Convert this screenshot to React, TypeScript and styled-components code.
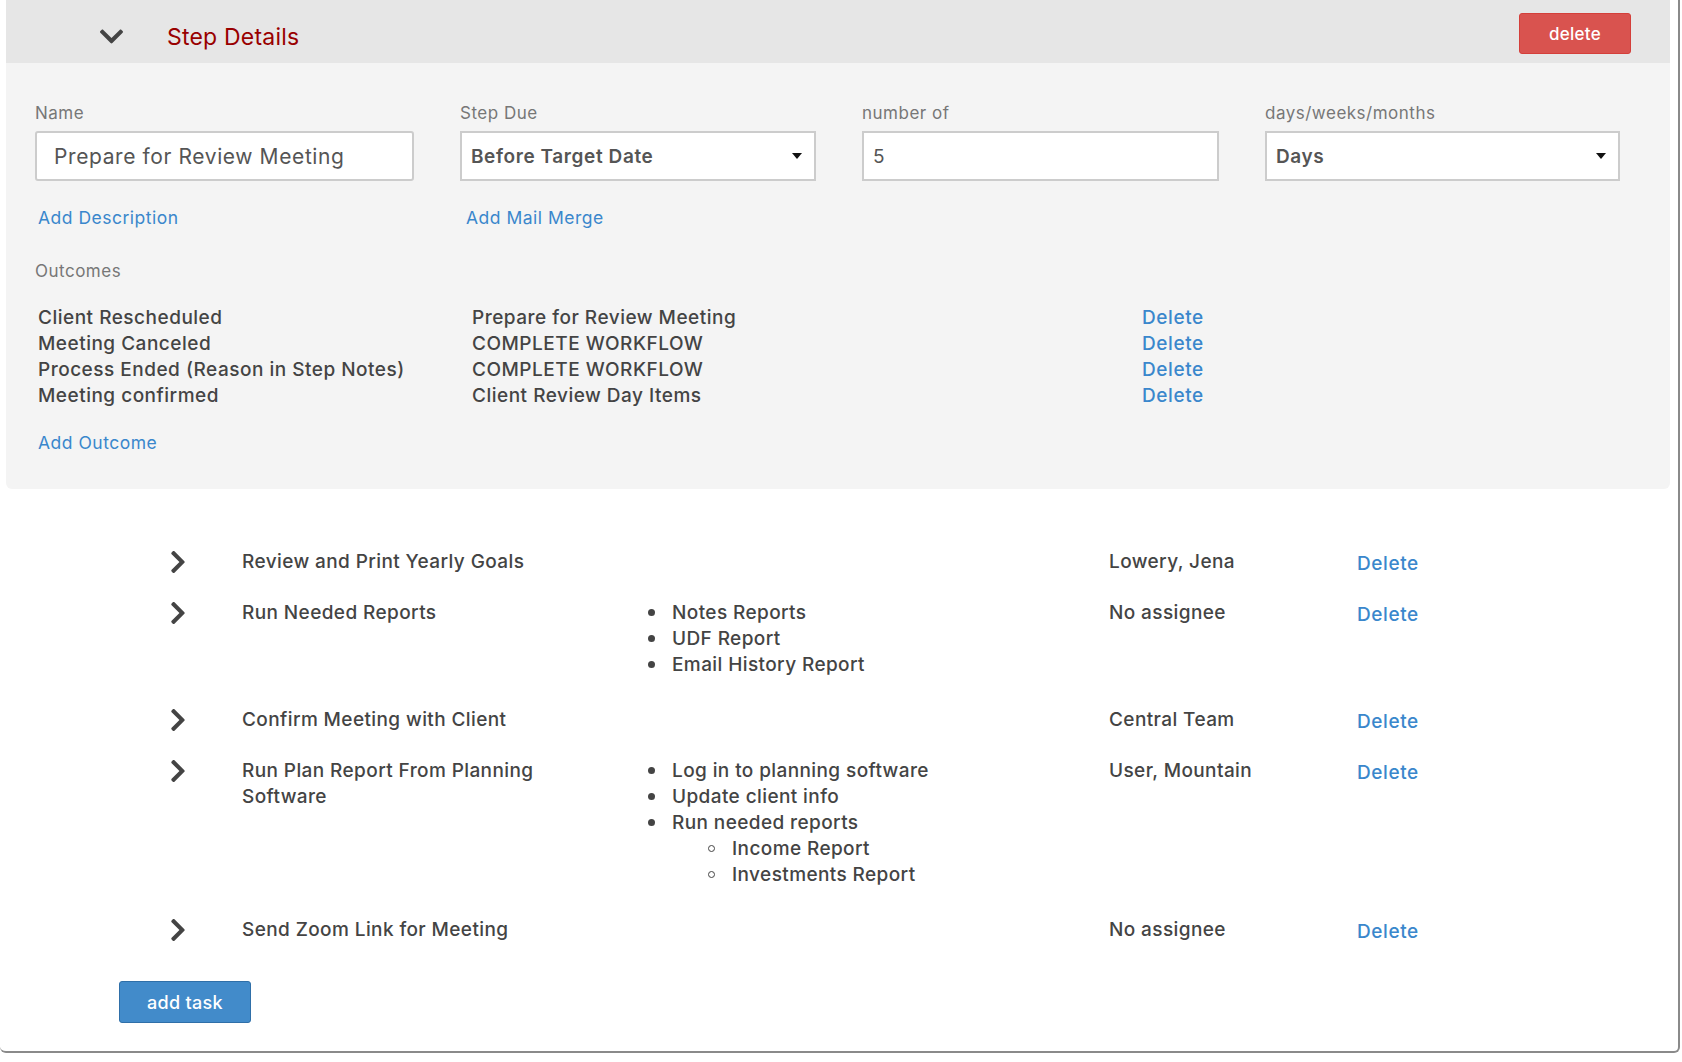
import React from 'react'
import styled, { createGlobalStyle } from 'styled-components'
import { FaChevronDown, FaChevronRight } from 'react-icons/fa'

const colors = {
    text: '#444444',
    label: '#777777',
    link: '#3a87cc',
    title: '#990000',
    header: '#e6e6e6',
    panel: '#f4f4f4',
    border: '#cccccc',
    danger: '#d9534f',
    primary: '#428bca',
}

const GlobalStyle = createGlobalStyle`
    html, body {
        margin: 0;
        padding: 0;
        background: #ffffff;
    }
    body {
        font-family: Inter, 'Noto Sans', sans-serif;
        color: ${colors.text};
    }
`

const Card = styled.div`
    width: 1680px;
    height: 1053px;
    box-sizing: border-box;
    padding: 0 8px 0 6px;
    border-right: 2px solid #8a8a8a;
    border-bottom: 2px solid #8a8a8a;
    border-bottom-right-radius: 6px;
    border-bottom-left-radius: 6px;
    background: #fff;
`

const Header = styled.div`
    height: 63px;
    box-sizing: border-box;
    display: flex;
    align-items: center;
    padding: 10px 39px 0 92px;
    background: ${colors.header};
    color: #444;
`

const Title = styled.div`
    margin-left: 42px;
    flex: 1;
    font-size: 23px;
    color: ${colors.title};
    letter-spacing: 0.2px;
`

const Button = styled.button<{ variant?: 'danger' | 'primary' }>`
    height: 41px;
    border-radius: 3px;
    border: 1px solid
        ${({ variant }) => (variant === 'danger' ? '#d43f3a' : '#2f6fa8')};
    background: ${({ variant }) =>
        variant === 'danger' ? colors.danger : colors.primary};
    color: #fff;
    font-family: Inter, 'Noto Sans', sans-serif;
    font-size: 17px;
    font-weight: 500;
    letter-spacing: 0.3px;
    padding: 0;
`

const DeleteStepButton = styled(Button)`
    width: 112px;
    margin-top: -6px;
`

const AddTaskButton = styled(Button)`
    width: 132px;
    height: 42px;
    margin: 13px 0 0 113px;
    font-size: 18px;
`

const Panel = styled.div`
    height: 426px;
    box-sizing: border-box;
    padding: 40px 29px 0 29px;
    background: ${colors.panel};
    border-radius: 0 0 6px 6px;
`

const FieldGrid = styled.div`
    display: grid;
    grid-template-columns: 425px 402px 403px 1fr;
`

const Field = styled.div`
    display: flex;
    flex-direction: column;
    align-items: flex-start;
`

const Label = styled.div`
    font-size: 17px;
    line-height: 20px;
    color: ${colors.label};
    letter-spacing: 0.5px;
    margin-bottom: 8px;
`

const Box = styled.div<{ width: number; bold?: boolean; large?: boolean }>`
    width: ${({ width }) => width}px;
    height: 50px;
    box-sizing: border-box;
    border: 2px solid ${colors.border};
    border-radius: ${({ large }) => (large ? '3px' : '0')};
    background: #fff;
    display: flex;
    align-items: center;
    padding: 0 12px 0 ${({ large }) => (large ? 17 : 9)}px;
    font-size: ${({ large }) => (large ? 21 : 19)}px;
    font-weight: ${({ bold }) => (bold ? 600 : 400)};
    letter-spacing: 0.6px;
    color: #555;
`

const BoxText = styled.span`
    flex: 1;
`

const Caret = styled.span`
    width: 0;
    height: 0;
    border-left: 5px solid transparent;
    border-right: 5px solid transparent;
    border-top: 6px solid #111;
`

const Link = styled.a<{ top?: number }>`
    display: block;
    margin-top: ${({ top = 0 }) => top}px;
    font-size: 17.5px;
    line-height: 20px;
    letter-spacing: 0.5px;
    color: ${colors.link};
    text-decoration: none;
    cursor: pointer;
`

const RowDelete = styled(Link)`
    font-size: 19px;
    font-weight: 500;
    line-height: 26px;
    letter-spacing: 0.6px;
`

const LinkRow = styled.div`
    display: grid;
    grid-template-columns: 428px 1fr;
    margin-top: 27px;
    padding-left: 3px;
`

const SectionLabel = styled(Label)`
    margin: 33px 0 22px;
`

const OutcomeRow = styled.div`
    display: grid;
    grid-template-columns: 434px 670px 1fr;
    padding-left: 3px;
    font-size: 19px;
    font-weight: 500;
    line-height: 26px;
    letter-spacing: 0.5px;
    transform: translateY(2px);
`

const Tasks = styled.div`
    padding: 60px 0 0 0;
`

const TaskRow = styled.div`
    display: grid;
    grid-template-columns: 77px 340px 527px 248px auto;
    padding-left: 159px;
    margin-bottom: 23px;
    font-size: 19px;
    font-weight: 500;
    line-height: 26px;
    letter-spacing: 0.4px;
`

const Chevron = styled.span`
    display: flex;
    align-items: center;
    height: 26px;
    color: #444;
`

const BulletList = styled.ul`
    margin: 0 0 6px;
    padding-left: 90px;
    list-style: none;
    li::before {
        content: '';
        display: inline-block;
        width: 7px;
        height: 7px;
        border-radius: 50%;
        background: #444;
        margin: 0 17px 0 -24px;
        vertical-align: 3px;
    }
    ul {
        margin: 0;
        padding-left: 60px;
        list-style: none;
    }
    ul li::before {
        width: 5px;
        height: 5px;
        background: transparent;
        border: 1.5px solid #444;
    }
`

const TaskDelete = styled(RowDelete)`
    padding-top: 2px;
`

type Task = {
    name: string
    items?: (string | { text: string; sub: string[] })[]
    assignee: string
}

const outcomes = [
    ['Client Rescheduled', 'Prepare for Review Meeting'],
    ['Meeting Canceled', 'COMPLETE WORKFLOW'],
    ['Process Ended (Reason in Step Notes)', 'COMPLETE WORKFLOW'],
    ['Meeting confirmed', 'Client Review Day Items'],
]

const tasks: Task[] = [
    { name: 'Review and Print Yearly Goals', assignee: 'Lowery, Jena' },
    {
        name: 'Run Needed Reports',
        items: ['Notes Reports', 'UDF Report', 'Email History Report'],
        assignee: 'No assignee',
    },
    { name: 'Confirm Meeting with Client', assignee: 'Central Team' },
    {
        name: 'Run Plan Report From Planning Software',
        items: [
            'Log in to planning software',
            'Update client info',
            {
                text: 'Run needed reports',
                sub: ['Income Report', 'Investments Report'],
            },
        ],
        assignee: 'User, Mountain',
    },
    { name: 'Send Zoom Link for Meeting', assignee: 'No assignee' },
]

export default function App() {
    return (
        <>
            <GlobalStyle />
            <Card>
                <Header>
                    <FaChevronDown size={27} />
                    <Title>Step Details</Title>
                    <DeleteStepButton variant="danger">delete</DeleteStepButton>
                </Header>

                <Panel>
                    <FieldGrid>
                        <Field>
                            <Label>Name</Label>
                            <Box width={379} large>
                                <BoxText>Prepare for Review Meeting</BoxText>
                            </Box>
                        </Field>
                        <Field>
                            <Label>Step Due</Label>
                            <Box width={356} bold>
                                <BoxText>Before Target Date</BoxText>
                                <Caret />
                            </Box>
                        </Field>
                        <Field>
                            <Label>number of</Label>
                            <Box width={357}>
                                <BoxText>5</BoxText>
                            </Box>
                        </Field>
                        <Field>
                            <Label>days/weeks/months</Label>
                            <Box width={355} bold>
                                <BoxText>Days</BoxText>
                                <Caret />
                            </Box>
                        </Field>
                    </FieldGrid>

                    <LinkRow>
                        <Link>Add Description</Link>
                        <Link>Add Mail Merge</Link>
                    </LinkRow>

                    <SectionLabel>Outcomes</SectionLabel>
                    {outcomes.map(([name, next], i) => (
                        <OutcomeRow key={i}>
                            <span>{name}</span>
                            <span>{next}</span>
                            <RowDelete>Delete</RowDelete>
                        </OutcomeRow>
                    ))}
                    <Link top={26} style={{ paddingLeft: 3 }}>
                        Add Outcome
                    </Link>
                </Panel>

                <Tasks>
                    {tasks.map((task) => (
                        <TaskRow key={task.name}>
                            <Chevron>
                                <FaChevronRight size={26} />
                            </Chevron>
                            <span>{task.name}</span>
                            <div>
                                {task.items && (
                                    <BulletList>
                                        {task.items.map((item) =>
                                            typeof item === 'string' ? (
                                                <li key={item}>{item}</li>
                                            ) : (
                                                <li key={item.text}>
                                                    {item.text}
                                                    <ul>
                                                        {item.sub.map((s) => (
                                                            <li key={s}>{s}</li>
                                                        ))}
                                                    </ul>
                                                </li>
                                            )
                                        )}
                                    </BulletList>
                                )}
                            </div>
                            <span>{task.assignee}</span>
                            <TaskDelete>Delete</TaskDelete>
                        </TaskRow>
                    ))}
                    <AddTaskButton variant="primary">add task</AddTaskButton>
                </Tasks>
            </Card>
        </>
    )
}
